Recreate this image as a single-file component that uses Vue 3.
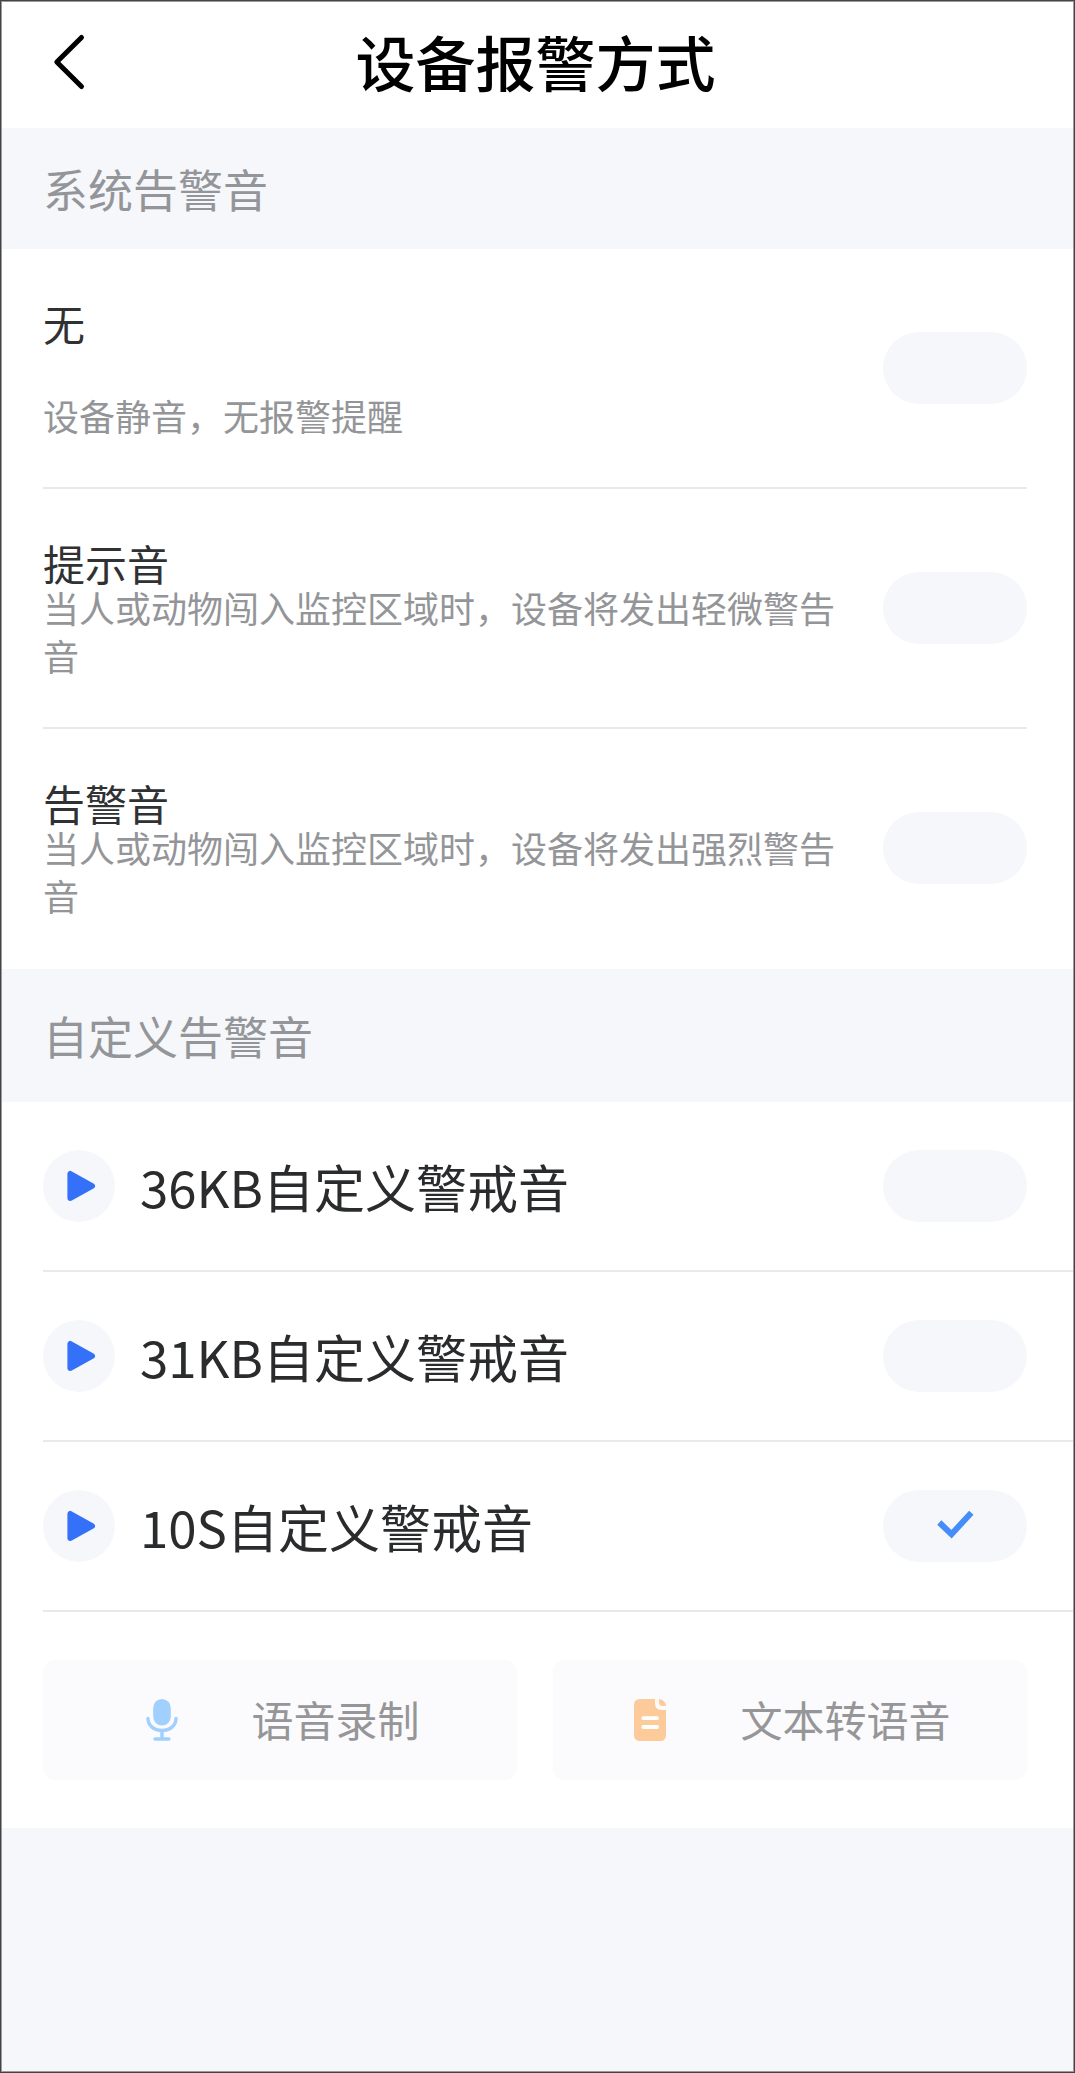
<script setup>
import { ref } from "vue";

const systemSounds = [
    { id: "none", name: "无", desc: "设备静音，无报警提醒" },
    {
        id: "tip",
        name: "提示音",
        desc: "当人或动物闯入监控区域时，设备将发出轻微警告音",
    },
    {
        id: "alarm",
        name: "告警音",
        desc: "当人或动物闯入监控区域时，设备将发出强烈警告音",
    },
];

const customSounds = [
    { id: "c36", name: "36KB自定义警戒音" },
    { id: "c31", name: "31KB自定义警戒音" },
    { id: "c10", name: "10S自定义警戒音" },
];

const selected = ref("c10");

const select = (id) => {
    selected.value = id;
};
</script>

<template>
    <div class="page">
        <header class="header">
            <svg class="back" viewBox="0 0 36 60">
                <path d="M30.5 5.5L5.8 30L30.5 54.5" />
            </svg>
            <h1>设备报警方式</h1>
        </header>

        <h2 class="section-title">系统告警音</h2>
        <div class="panel">
            <div v-for="item in systemSounds" :key="item.id" class="system-item">
                <div class="text">
                    <span class="name">{{ item.name }}</span>
                    <span class="desc">{{ item.desc }}</span>
                </div>
                <div class="pill" @click="select(item.id)">
                    <svg v-if="selected === item.id" viewBox="0 0 144 72">
                        <path d="M56.3 32.5L68.5 44.2L88.3 22.7" />
                    </svg>
                </div>
            </div>
        </div>

        <h2 class="section-title custom">自定义告警音</h2>
        <div class="panel">
            <div v-for="item in customSounds" :key="item.id" class="custom-item">
                <div class="play">
                    <svg viewBox="0 0 72 72">
                        <path d="M27.4 24V48L49 36Z" />
                    </svg>
                </div>
                <span class="custom-name">{{ item.name }}</span>
                <div class="pill" @click="select(item.id)">
                    <svg v-if="selected === item.id" viewBox="0 0 144 72">
                        <path d="M56.3 32.5L68.5 44.2L88.3 22.7" />
                    </svg>
                </div>
            </div>

            <div class="actions">
                <div class="action">
                    <svg class="mic" viewBox="0 0 42 42">
                        <rect x="13.2" y="0" width="17.6" height="26.5" rx="8.8" />
                        <path d="M8 19.5C8 26.5 14 31.5 22 31.5S36 26.5 36 19.5M22 32V39M15 40H29" />
                    </svg>
                    <span>语音录制</span>
                </div>
                <div class="action">
                    <svg class="doc" viewBox="0 0 42 42">
                        <path
                            class="sheet"
                            d="M11 0H26V4.5Q26 11 32.5 11H37V36Q37 42 31 42H11Q5 42 5 36V6Q5 0 11 0Z"
                        />
                        <path class="sheet" d="M30 0Q36.5 0.8 37 7H33.5Q30 7 30 3.5Z" />
                        <path class="lines" d="M14.3 19.2H28M14.3 28H28" />
                    </svg>
                    <span>文本转语音</span>
                </div>
            </div>
        </div>
    </div>
</template>

<style>
body {
    margin: 0;
}
</style>

<style scoped>
.page {
    box-sizing: border-box;
    height: 2073px;
    border: 1px solid #444;
    outline: 1px solid #9b9b9b;
    outline-offset: -2px;
    background: #f5f7fb;
    font-family: "Noto Sans CJK SC", sans-serif;
}

.header {
    display: grid;
    grid-template-columns: 1fr auto 1fr;
    align-items: center;
    box-sizing: border-box;
    height: 127px;
    padding: 0 54px 5px 50px;
    background: #fff;
}

.back {
    width: 36px;
    height: 60px;
    fill: none;
    stroke: #000;
    stroke-width: 5;
    stroke-linecap: round;
    stroke-linejoin: round;
}

h1 {
    margin: 0;
    font-size: 60px;
    font-weight: 500;
    line-height: 84px;
    color: #000;
    padding-bottom: 3px;
}

.section-title {
    display: flex;
    align-items: center;
    height: 121px;
    margin: 0;
    padding-left: 42px;
    font-size: 45px;
    font-weight: 400;
    color: #939599;
}

.section-title.custom {
    height: 133px;
}

.panel {
    background: #fff;
}

.system-item {
    display: flex;
    align-items: center;
    justify-content: space-between;
    box-sizing: border-box;
    height: 240px;
    margin: 0 47px 0 42px;
    border-bottom: 2px solid #e9e9e9;
}

.system-item:last-child {
    border-bottom-color: transparent;
}

.text {
    display: flex;
    flex-direction: column;
    justify-content: space-between;
    width: 800px;
    height: 136px;
    padding-top: 5px;
}

.name {
    font-size: 42px;
    line-height: 40px;
    color: #303133;
}

.desc {
    font-size: 36px;
    line-height: 48px;
    color: #949598;
}

.pill {
    flex: none;
    width: 144px;
    height: 72px;
    border-radius: 36px;
    background: #f5f7fb;
}

.pill svg {
    display: block;
    fill: none;
    stroke: #458df8;
    stroke-width: 6;
}

.custom-item {
    display: flex;
    align-items: center;
    box-sizing: border-box;
    height: 170px;
    margin-left: 42px;
    padding-right: 47px;
    border-bottom: 2px solid #e9e9e9;
}

.play {
    width: 72px;
    height: 72px;
    border-radius: 50%;
    background: #f5f7fb;
}

.play svg {
    display: block;
    fill: #3471f8;
    stroke: #3471f8;
    stroke-width: 6;
    stroke-linejoin: round;
}

.custom-name {
    flex: 1;
    margin-left: 25px;
    font-size: 51px;
    color: #2a2b2d;
}

.actions {
    display: flex;
    gap: 36px;
    padding: 48px 47px 48px 42px;
}

.action {
    display: flex;
    flex: 1;
    align-items: center;
    justify-content: center;
    gap: 69px;
    height: 120px;
    border-radius: 12px;
    background: #fbfbfd;
    font-size: 42px;
    color: #969698;
}

.action span {
    padding-bottom: 3px;
}

.action svg {
    width: 42px;
    height: 42px;
}

.mic {
    fill: #a1cffe;
}

.mic path {
    fill: none;
    stroke: #a1cffe;
    stroke-width: 3.4;
    stroke-linecap: round;
}

.sheet {
    fill: #fdcb99;
}

.lines {
    stroke: #fff;
    stroke-width: 3.8;
    stroke-linecap: round;
}
</style>
